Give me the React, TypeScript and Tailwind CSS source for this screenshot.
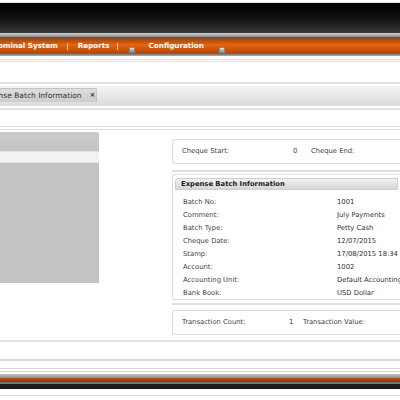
const rows: [string, string][] = [
  ["Batch No:", "1001"],
  ["Comment:", "July Payments"],
  ["Batch Type:", "Petty Cash"],
  ["Cheque Date:", "12/07/2015"],
  ["Stamp:", "17/08/2015 18:34"],
  ["Account:", "1002"],
  ["Accounting Unit:", "Default Accounting"],
  ["Bank Book:", "USD Dollar"],
];

function NavSep({ left, right }: { left: string; right: string }) {
  return <span className={`h-[7px] w-px shrink-0 bg-[#f3d2b8] ${left} ${right}`} />;
}

function NavIcon() {
  return (
    <span className="mt-[7px] h-[6px] w-[6px] shrink-0 border border-[#888] bg-gradient-to-b from-[#e6e6e6] to-[#8c8c8c]" />
  );
}

export default function App() {
  return (
    <div className="relative h-[400px] w-[400px] overflow-hidden bg-white font-['DejaVu_Sans',sans-serif] text-[#444]">
      {/* header */}
      <div className="h-[3px] border-b border-[#ddd] bg-white" />
      <div className="h-[30px] bg-gradient-to-b from-[#020202] via-[#111] to-[#3a3a3a]" />
      <div className="h-[4px] bg-gradient-to-b from-[#d0d0d0] to-[#8c8c8c]" />
      <nav className="flex h-[16px] items-center bg-gradient-to-b from-[#8a3f12] via-[#e8650f] to-[#b64606] pt-[2px] text-[7.2px] font-bold text-white">
        <span className="ml-[-8px] shrink-0 whitespace-nowrap">Nominal System</span>
        <NavSep left="ml-[9px]" right="mr-[10px]" />
        <span className="shrink-0">Reports</span>
        <NavSep left="ml-[7px]" right="mr-[11px]" />
        <NavIcon />
        <span className="ml-[14px] shrink-0">Configuration</span>
        <span className="ml-[15px] flex">
          <NavIcon />
        </span>
      </nav>
      <div className="h-[3px] bg-gradient-to-b from-[#5a5a5a] to-[#b0b0b0]" />
      <div className="h-[3px]" />
      <div className="h-[3px] border-y border-[#ddd]" />
      <div className="h-[22px] border-b-2 border-[#e2e2e2]" />

      {/* tab bar */}
      <div className="mt-[2px] flex h-[20px] items-end bg-gradient-to-b from-[#f2f2f2] to-[#dcdcdc]">
        <div className="mb-[4px] flex h-[14px] w-[97px] shrink-0 items-center rounded-tr-[2px] border-r border-t border-[#c4c4c4] bg-gradient-to-b from-[#dedede] to-[#cdcdcd] text-[7.5px] text-[#333]">
          <span className="ml-[-20px] shrink-0 whitespace-nowrap">Expense Batch Information</span>
          <span className="ml-[8px] text-[7px] font-bold">×</span>
        </div>
      </div>
      <div className="mt-[2px] h-[2px] bg-[#e2e2e2]" />
      <div className="mt-[16px] h-[4px] border-y border-[#ddd]" />

      {/* content */}
      <div className="flex h-[210px]">
        <div className="mt-[2px] flex h-[151px] w-[99px] shrink-0 flex-col rounded-tr-[3px] bg-[#c3c3c3]">
          <div className="h-[19px] rounded-tr-[3px] bg-gradient-to-b from-[#cbcbcb] to-[#c4c4c4]" />
          <div className="h-[12px] border-y border-[#e2e2e2] bg-[#f2f2f2]" />
        </div>
        <div className="ml-[73px] flex min-w-0 flex-1 flex-col text-[6.8px]">
          <div className="mt-[9px] flex h-[25px] items-center rounded-l-[3px] border border-r-0 border-[#dcdcdc] pl-[9px]">
            <span className="w-[111px] shrink-0">Cheque Start:</span>
            <span className="w-[18px] shrink-0">0</span>
            <span className="shrink-0">Cheque End:</span>
          </div>
          <div className="mt-[6px] h-[2px] bg-[#e0e0e0]" />
          <div className="mt-[2px] flex h-[126px] flex-col rounded-tl-[3px] border border-r-0 border-[#dcdcdc] px-[2px] pt-[3px]">
            <div className="flex h-[13px] items-center rounded-tl-[3px] border border-[#cfcfcf] bg-gradient-to-b from-[#f2f2f2] to-[#d6d6d6] pl-[5px] font-bold text-[#222]">
              Expense Batch Information
            </div>
            <div className="mt-[5px] flex flex-col">
              {rows.map(([label, value]) => (
                <div key={label} className="flex h-[13px] items-center pl-[8px]">
                  <span className="w-[154px] shrink-0">{label}</span>
                  <span className="shrink-0 whitespace-nowrap text-[#333]">{value}</span>
                </div>
              ))}
            </div>
          </div>
          <div className="mt-[3px] h-[2px] bg-[#e0e0e0]" />
          <div className="mt-[5px] flex h-[25px] items-center rounded-l-[3px] border border-r-0 border-[#dcdcdc] pl-[9px]">
            <span className="w-[107px] shrink-0">Transaction Count:</span>
            <span className="w-[14px] shrink-0">1</span>
            <span className="shrink-0">Transaction Value:</span>
          </div>
        </div>
      </div>

      {/* bottom frames */}
      <div className="h-[2px] bg-[#e4e4e4]" />
      <div className="mt-[17px] h-[2px] bg-[#dcdcdc]" />
      <div className="mt-[7px] h-[4px] border-y border-[#d6d6d6]" />
      <div className="mt-[2px] h-[4px] bg-gradient-to-b from-[#c8c8c8] to-[#8a8a8a]" />
      <div className="h-[4px] bg-gradient-to-b from-[#c05010] to-[#8a3408]" />
      <div className="h-[2px] bg-[#777]" />
      <div className="h-[5px] bg-[#1c1c1c]" />
      <div className="h-[6px] bg-white" />
      <div className="h-[1px] bg-[#ddd]" />
    </div>
  );
}
